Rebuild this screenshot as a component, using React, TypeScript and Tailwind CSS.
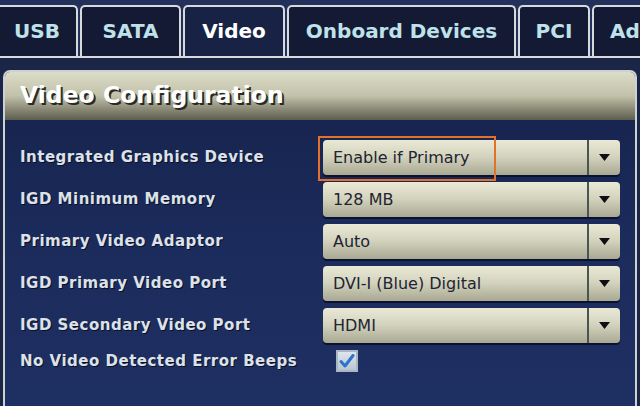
import React from 'react';

const tabs = [
  { name: 'USB', w: 'w-[78px]', first: true },
  { name: 'SATA', w: 'w-[101px]' },
  { name: 'Video', w: 'w-[102px]', active: true },
  { name: 'Onboard Devices', w: 'w-[229px]' },
  { name: 'PCI', w: 'w-[72px]' },
  { name: 'Ad', w: 'w-[80px]', last: true },
];

const rows = [
  { label: 'Integrated Graphics Device', value: 'Enable if Primary', highlight: true },
  { label: 'IGD Minimum Memory', value: '128 MB' },
  { label: 'Primary Video Adaptor', value: 'Auto' },
  { label: 'IGD Primary Video Port', value: 'DVI-I (Blue) Digital' },
  { label: 'IGD Secondary Video Port', value: 'HDMI' },
];

const Select = ({ value, highlight }: { value: string; highlight?: boolean }) => (
  <div className="relative flex h-[35px] w-[297px] rounded-[4px] bg-gradient-to-b from-[#e9e9d6] via-[#d2d2bc] to-[#a9a993] shadow-[0_2px_0_#0b1230]">
    <div className="flex flex-1 items-center pl-[10px] text-[16px] text-[#1e2433]">{value}</div>
    <div className="w-[2px] bg-[#4b5553]" />
    <div className="flex w-[31px] items-center justify-center">
      <svg width="11" height="7" viewBox="0 0 11 7">
        <path d="M0 0 H11 L5.5 7 Z" fill="#0d0f14" />
      </svg>
    </div>
    {highlight && (
      <div className="absolute left-[-5px] top-[-4px] h-[45px] w-[178px] border-2 border-[#e2722b]" />
    )}
  </div>
);

export default function App() {
  return (
    <div className="h-[406px] w-[640px] overflow-hidden bg-[#1b2647] font-['DejaVu_Sans',sans-serif]">
      {/* tab strip */}
      <div className="flex h-[58px] gap-[2px] border-b-2 border-[#d6dadd] bg-[#22305a] pt-[5px]">
        {tabs.map((t) => (
          <div
            key={t.name}
            className={`flex shrink-0 items-center pb-[2px] ${t.w} ${
              t.first ? 'rounded-tr-[5px] border-l-0 pl-[14px]' : t.last ? 'rounded-t-[5px] pl-[16px]' : 'rounded-t-[5px] justify-center'
            } ${t.active ? 'bg-[#182244] text-white' : 'bg-[#141a34] text-[#bfe2ea]'} border-2 border-b-0 border-[#d6dadd] text-[20px] font-bold`}
          >
            {t.name}
          </div>
        ))}
      </div>

      {/* panel */}
      <div className="px-[3px] pt-[12px]">
        <div className="h-[340px] rounded-t-[7px] border-2 border-b-0 border-[#cdd1d4] bg-gradient-to-b from-[#16224a] via-[#1b2b5c] to-[#1e2f61]">
          <div className="flex h-[48px] items-center rounded-t-[5px] bg-gradient-to-b from-[#dcdcc8] via-[#c2c2aa] to-[#5e5e4e] pl-[15px]">
            <span className="text-[23.5px] font-bold text-white [text-shadow:2px_2px_0_#2a2a24]">
              Video Configuration
            </span>
          </div>
          <div className="flex flex-col gap-[7px] px-[15px] pt-[20px]">
            {rows.map((r) => (
              <div key={r.label} className="flex items-center">
                <div className="w-[303px] text-[15px] font-bold tracking-[0.5px] text-[#dde2e8] [text-shadow:1px_1px_0_#0a1028]">
                  {r.label}
                </div>
                <Select value={r.value} highlight={r.highlight} />
              </div>
            ))}
            <div className="flex h-[22px] items-center">
              <div className="w-[303px] text-[15px] font-bold tracking-[0.5px] text-[#dde2e8] [text-shadow:1px_1px_0_#0a1028]">
                No Video Detected Error Beeps
              </div>
              <div className="ml-[13px] flex h-[22px] w-[22px] items-center justify-center border-2 border-[#a9b6c4] bg-gradient-to-b from-[#dfe6ec] to-[#b9c6d2]">
                <svg width="16" height="14" viewBox="0 0 16 14">
                  <path d="M2 7.5 L6 12 L14 1.5" fill="none" stroke="#2f73c9" strokeWidth="3" strokeLinecap="round" strokeLinejoin="round" />
                </svg>
              </div>
            </div>
          </div>
        </div>
      </div>
    </div>
  );
}
